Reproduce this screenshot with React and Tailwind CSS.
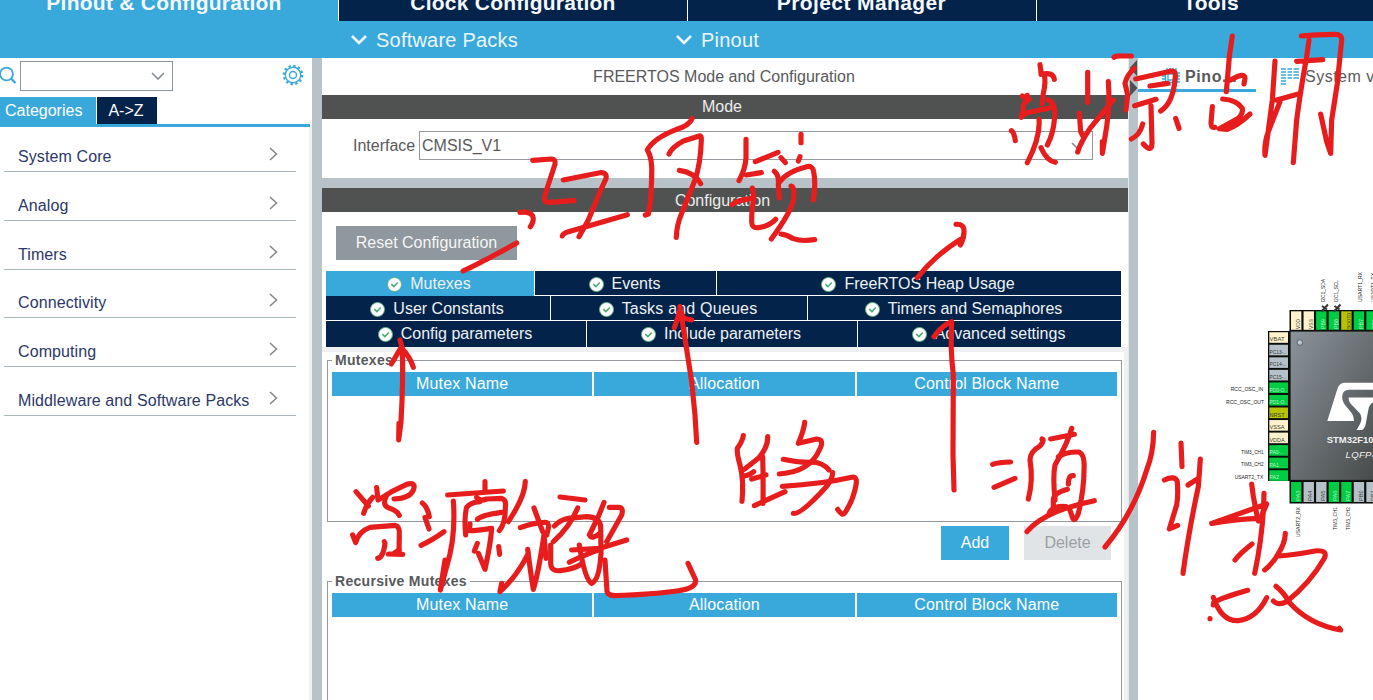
import React from "react";

const Check = () => (
  <svg className="h-[15px] w-[15px] shrink-0" viewBox="0 0 15 15">
    <circle cx="7.500" cy="7.500" r="7" fill="#fff" stroke="#5cb07e" strokeWidth="0.900" />
    <path d="M4.300 7.100 6.900 9.600 10.800 5.400" fill="none" stroke="#46ab70" strokeWidth="1.500" />
  </svg>
);

const Chevron = ({ className, d = "M1 1 7 7 13 1", box = "0 0 14 8", w = 1.6 }) => (
  <svg className={className} viewBox={box}>
    <path d={d} fill="none" stroke="currentColor" strokeWidth={w} />
  </svg>
);

const Header = () => (
  <header className="shrink-0 bg-[#39a9dc] text-white">
    <div className="flex h-[21px] overflow-hidden text-center text-[21px] leading-[24px] font-bold tracking-[0.25px] text-[#f4f8fb]">
      <div className="w-[338px] shrink-0 pr-[10px]"><div className="-mt-[9px] whitespace-nowrap">Pinout &amp; Configuration</div></div>
      <div className="w-[349px] shrink-0 border-l border-white bg-[#03234b]"><div className="-mt-[9px]">Clock Configuration</div></div>
      <div className="w-[349px] shrink-0 border-l border-white bg-[#03234b]"><div className="-mt-[9px] pr-[1px] tracking-[0.4px]">Project Manager</div></div>
      <div className="w-[349px] shrink-0 border-l border-white bg-[#03234b]"><div className="-mt-[9px]">Tools</div></div>
    </div>
    <div className="flex h-[37px] items-center text-[20px] tracking-[0.22px] text-[#edf6fb]">
      <div className="box-content flex w-[325px] items-center gap-[9px] pl-[351px]">
        <Chevron className="h-[11px] w-[16px]" box="0 0 16 11" d="M1 2 8 9 15 2" w={2.6} />
        <span>Software Packs</span>
      </div>
      <div className="flex items-center gap-[9px]">
        <Chevron className="h-[11px] w-[16px]" box="0 0 16 11" d="M1 2 8 9 15 2" w={2.6} />
        <span>Pinout</span>
      </div>
    </div>
  </header>
);

const Gear = () => (
  <svg className="h-[22px] w-[22px] text-[#39a9dc]" viewBox="0 0 22 22" fill="none" stroke="currentColor">
    <circle cx="11" cy="11" r="3.500" strokeWidth="1.400" />
    <circle cx="11" cy="11" r="7.700" strokeWidth="1.400" />
    <circle cx="11" cy="11" r="9.200" strokeWidth="2.200" strokeDasharray="2.400 2.417" />
  </svg>
);

const categories = ["System Core", "Analog", "Timers", "Connectivity", "Computing", "Middleware and Software Packs"];

const Sidebar = () => (
  <aside className="flex w-[312px] shrink-0 flex-col bg-white">
    <div className="flex h-[39px] shrink-0 items-start pt-[3px]">
      <svg className="mt-[4px] h-[20px] w-[20px] shrink-0" viewBox="0 0 20 20" fill="none" stroke="#39a9dc">
        <circle cx="6.500" cy="9" r="6.400" strokeWidth="1.800" />
        <path d="M11 13.500 15.500 18" strokeWidth="2.300" />
      </svg>
      <div className="flex h-[30px] w-[153px] items-center justify-end border border-[#8c959b] pr-[7px] text-[#858b90]">
        <Chevron className="h-[8px] w-[14px]" />
      </div>
      <div className="mt-[3px] ml-[109px]"><Gear /></div>
    </div>
    <div className="flex h-[27px] shrink-0 gap-px text-[16px] text-white">
      <div className="w-[96px] bg-[#39a9dc] pl-[5px] leading-[27px]">Categories</div>
      <div className="w-[60px] bg-[#03234b] pr-[2px] text-center leading-[27px]">A-&gt;Z</div>
    </div>
    <div className="h-[3px] w-[310px] shrink-0 bg-[#39a9dc]" />
    <div className="flex-1 border-r-[3px] border-[#eef0f2] pr-[13px] pl-[4px]">
      {categories.map((c, i) => (
        <div key={c} className={(i === 0 ? "h-[45px]" : "h-[48.8px]") + " flex items-end justify-between border-b border-[#a9b7bd] pr-[18px] pb-[3px] pl-[14px] text-[16px] tracking-[0.1px] text-[#2c3868]"}>
          <span className="leading-[22px]">{c}</span>
          <Chevron className="mb-[7px] h-[14px] w-[9px] text-[#858585]" box="0 0 9 14" d="M1 1 7.500 7 1 13" w={1.5} />
        </div>
      ))}
    </div>
  </aside>
);

const TabCell = ({ label, cls }) => (
  <div className={"flex items-center justify-center gap-[8px] pr-[2px] " + cls}>
    <Check />
    <span>{label}</span>
  </div>
);

const TableHead = () => (
  <div className="mx-[4px] grid grid-cols-3 gap-[2px] text-center text-[16px] leading-[24px] tracking-[0.15px] text-white">
    <div className="h-[24px] bg-[#39a9dc]">Mutex Name</div>
    <div className="h-[24px] bg-[#39a9dc]">Allocation</div>
    <div className="h-[24px] bg-[#39a9dc]">Control Block Name</div>
  </div>
);

const Group = ({ title, cls }) => (
  <fieldset className={"ml-[5px] w-[795px] shrink-0 border border-[#93999d] " + cls}>
    <legend className="ml-[4px] px-[3px] text-[14px] leading-[16px] font-bold tracking-[0.3px] text-[#58595b]">{title}</legend>
    <div className="pt-[4px]"><TableHead /></div>
  </fieldset>
);

const Middle = () => (
  <main className="flex w-[806px] shrink-0 flex-col bg-white text-[16px] text-[#58595b]">
    <div className="h-[37px] shrink-0 pt-px pr-[2px] text-center leading-[36px]">FREERTOS Mode and Configuration</div>
    <div className="h-[24px] shrink-0 bg-[#505251] pr-[6px] text-center leading-[24px] text-[#eceded]">Mode</div>
    <div className="flex h-[59px] shrink-0 items-start pt-[12px] pl-[31px]">
      <span className="w-[66px] leading-[30px]">Interface</span>
      <div className="flex h-[29px] w-[674px] items-center justify-between border border-[#93999d] pr-[7px] pl-[2px]">
        <span>CMSIS_V1</span>
        <Chevron className="h-[8px] w-[14px] text-[#858b90]" />
      </div>
    </div>
    <div className="h-[10px] shrink-0 bg-[#b7c3c9]" />
    <div className="h-[24px] shrink-0 bg-[#505251] pr-[5px] text-center leading-[25px] text-[#eceded]">Configuration</div>
    <div className="mt-[14px] ml-[14px] h-[34px] w-[181px] shrink-0 bg-[#8f989e] text-center leading-[34px] text-[#f5f6f7]">Reset Configuration</div>
    <div className="mt-[11px] ml-[4px] flex h-[76px] w-[795px] shrink-0 flex-col gap-px text-[#eef1f4]">
      <div className="flex h-[24px] shrink-0 gap-px">
        <TabCell label="Mutexes" cls="-mb-[2px] h-[26px] w-[208px] bg-[#39a9dc]" />
        <TabCell label="Events" cls="w-[181px] bg-[#03234b] pt-[2px]" />
        <TabCell label="FreeRTOS Heap Usage" cls="flex-1 bg-[#03234b] pt-[2px]" />
      </div>
      <div className="flex h-[24px] shrink-0 gap-px">
        <TabCell label="User Constants" cls="w-[224px] bg-[#03234b] pt-[2px]" />
        <TabCell label="Tasks and Queues" cls="w-[256px] bg-[#03234b] pt-[2px] tracking-[0.2px]" />
        <TabCell label="Timers and Semaphores" cls="flex-1 bg-[#03234b] pt-[2px]" />
      </div>
      <div className="flex h-[26px] shrink-0 gap-px">
        <TabCell label="Config parameters" cls="w-[260px] bg-[#03234b]" />
        <TabCell label="Include parameters" cls="w-[270px] bg-[#03234b]" />
        <TabCell label="Advanced settings" cls="flex-1 bg-[#03234b]" />
      </div>
    </div>
    <div className="h-[5px] shrink-0 bg-[#eef0f2]" />
    <div className="flex min-h-0 flex-1 flex-col border-r-[4px] border-[#eef0f2]">
      <Group title="Mutexes" cls="h-[170px]" />
      <div className="mt-[4px] flex h-[34px] shrink-0 justify-end gap-[15px] pr-[13px] text-center leading-[34px]">
        <div className="w-[68px] bg-[#39a9dc] text-white">Add</div>
        <div className="w-[87px] bg-[#e1e4e7] text-[#9a9fa4]">Delete</div>
      </div>
      <Group title="Recursive Mutexes" cls="mt-[13px] h-[200px]" />
    </div>
  </main>
);

const Y = "#fff2cc", N = "#b5c0c8", G = "#00cc44", O = "#b8c400";
const leftPins = [["VBAT", Y], ["PC13-..", N], ["PC14-..", N], ["PC15-..", N], ["PD0-O..", G], ["PD1-O..", G], ["NRST", O], ["VSSA", Y], ["VDDA", Y], ["PA0-..", G], ["PA1", G], ["PA2", G]];
const topPins = [["VDD", Y], ["VSS", Y], ["PB9", G], ["PB8", G], ["BOOT0", O], ["PB7", G], ["PB6", G]];
const bottomPins = [["PA3", G], ["PA4", N], ["PA5", N], ["PA6", G], ["PA7", G], ["PB0", N], ["PB1", N]];
const leftWidths = [15, 16.5, 16.5, 16.5, 17.5, 17.5, 15, 15, 15, 13.5, 9.5, 9.5];
const pinInk = (c) => (c === G ? "#b9f5c9" : "#3a3f36");

const Chip = () => (
  <svg className="block h-[608px] w-[235px]" viewBox="1138 92 235 608" fontFamily="Liberation Sans, sans-serif">
    <defs>
      <linearGradient id="die" x1="0" y1="0" x2="1" y2="1">
        <stop offset="0" stopColor="#8b949b" />
        <stop offset="1" stopColor="#454847" />
      </linearGradient>
    </defs>
    <path d="M1289.500 310H1380V332H1289.500ZM1268 331H1291V481H1268ZM1289.500 480H1380V503.500H1289.500Z" fill="#0a0d0a" />
    {leftPins.map(([t, c], i) => (
      <g key={t}>
        <rect x="1269.300" y={332.2 + i * 12.55} width="18.700" height="10.600" fill={c} />
        <text x="1269.500" y={341.3 + i * 12.55} fontSize="5.300" textLength={leftWidths[i]} lengthAdjust="spacingAndGlyphs" fill={pinInk(c)}>{t}</text>
      </g>
    ))}
    {topPins.map(([t, c], i) => (
      <g key={t}>
        <rect x={1291 + i * 12.55} y="311.300" width="10.400" height="18.500" fill={c} />
        <text transform={`translate(${1300.3 + i * 12.55} 329) rotate(-90)`} fontSize="5.300" textLength={t.length > 3 ? 16 : 10} lengthAdjust="spacingAndGlyphs" fill={pinInk(c)}>{t}</text>
      </g>
    ))}
    {bottomPins.map(([t, c], i) => (
      <g key={t}>
        <rect x={1291 + i * 12.55} y="482" width="10.400" height="20" fill={c} />
        <text transform={`translate(${1299.8 + i * 12.55} 501) rotate(-90)`} fontSize="5.300" textLength="10.500" lengthAdjust="spacingAndGlyphs" fill={pinInk(c)}>{t}</text>
      </g>
    ))}
    <rect x="1290" y="331" width="90" height="149.500" fill="url(#die)" stroke="#111" strokeWidth="1.200" />
    <circle cx="1299.800" cy="342.500" r="2.800" fill="#b8c6cf" stroke="#555e64" strokeWidth="0.900" />
    <g fill="#222" fontSize="5.300">
      <text x="1230.700" y="391.300" textLength="32.500" lengthAdjust="spacingAndGlyphs">RCC_OSC_IN</text>
      <text x="1226" y="403.800" textLength="38" lengthAdjust="spacingAndGlyphs">RCC_OSC_OUT</text>
      <text x="1241" y="453.800" textLength="22.500" lengthAdjust="spacingAndGlyphs">TIM3_CH1</text>
      <text x="1241" y="466.300" textLength="22.500" lengthAdjust="spacingAndGlyphs">TIM3_CH2</text>
      <text x="1234.700" y="479" textLength="28.500" lengthAdjust="spacingAndGlyphs">USART2_TX</text>
      <text transform="translate(1325 302) rotate(-90)" textLength="23" lengthAdjust="spacingAndGlyphs">I2C1_SDA</text>
      <text transform="translate(1337.800 302) rotate(-90)" textLength="22" lengthAdjust="spacingAndGlyphs">I2C1_SCL</text>
      <text transform="translate(1362.300 302) rotate(-90)" textLength="30" lengthAdjust="spacingAndGlyphs">USART1_RX</text>
      <text transform="translate(1374.500 302) rotate(-90)" textLength="29" lengthAdjust="spacingAndGlyphs">USART1_TX</text>
      <text transform="translate(1300 537) rotate(-90)" textLength="30" lengthAdjust="spacingAndGlyphs">USART2_RX</text>
      <text transform="translate(1337 530) rotate(-90)" textLength="23" lengthAdjust="spacingAndGlyphs">TIM3_CH1</text>
      <text transform="translate(1349.500 530) rotate(-90)" textLength="23" lengthAdjust="spacingAndGlyphs">TIM3_CH2</text>
    </g>
    <path d="M1328 304.500 1321.500 311.500M1322 306 1327 309.500M1340.500 304.500 1334 311.500M1334.500 306 1339.500 309.500" stroke="#333" strokeWidth="2" fill="none" />
    <path fill="#fff" d="M1327.300 421 1337.500 388.500Q1339.500 382.700 1345 382.700H1373V389.800H1349C1341 390 1340.500 399 1345 405L1352 413.500Q1354 417 1354 421Z" />
    <path fill="#fff" d="M1348.500 397.600H1373V402.500Q1369.500 404 1368.500 409L1365.500 425Q1364 430 1361 430H1356.500C1361 423 1363 419 1360 413.500L1350.500 403.500Q1348.500 401 1348.500 397.600Z" />
    <text x="1326.800" y="443.300" fontSize="8.800" fontWeight="bold" textLength="64" lengthAdjust="spacingAndGlyphs" fill="#f0f1f1">STM32F103C8</text>
    <text x="1345.500" y="458.300" fontSize="9.600" fontStyle="italic" letterSpacing="0.300" fill="#f0f1f1">LQFP48</text>
  </svg>
);

const ChipIcon = () => (
  <svg className="h-[18px] w-[18px]" viewBox="0 0 18 18" fill="none" stroke="#39a9dc">
    <rect x="3.500" y="3.500" width="11" height="11" strokeWidth="1.500" />
    <path d="M6 7V6H12V12H6Z" strokeWidth="1.300" />
    <path d="M5 0V3M8 0V3M11 0V3M14 0V3M5 15V18M8 15V18M11 15V18M14 15V18M0 5H3M0 8H3M0 11H3M0 14H3M15 5H18M15 8H18M15 11H18M15 14H18" strokeWidth="1.400" />
  </svg>
);

const Right = () => (
  <section className="flex min-w-0 flex-1 flex-col overflow-hidden bg-white">
    <div className="flex h-[34px] shrink-0 text-[16px] text-[#58595b]">
      <div className="flex h-[34px] w-[118px] shrink-0 items-center gap-[5px] border-b-[3px] border-[#39a9dc] pt-[6px] pl-[24px] font-bold tracking-[0.6px]">
        <ChipIcon />
        <span>Pino...</span>
      </div>
      <div className="flex shrink-0 items-center gap-[6px] pt-[3px] pl-[25px] tracking-[0.5px] whitespace-nowrap">
        <svg className="h-[17px] w-[18px]" viewBox="0 0 18 17" stroke="#39a9dc" strokeWidth="1.600">
          <path d="M0 1H5M6.500 1H11M12.500 1H18M0 4H5M6.500 4H11M12.500 4H18M0 7H5M6.500 7H11M12.500 7H18M0 10H5M6.500 10H11M12.500 10H18M0 13H5M0 16H5" />
        </svg>
        <span>System view</span>
      </div>
    </div>
    <Chip />
  </section>
);

// Freehand pen layer: each sheet holds strokes in thirds of a pixel from its own origin.
const sheets = [
  [500, 110, [
    "M98 151 155 147Q168 148 165 162L134 258Q130 276 145 277L222 272",
    "M190 210 300 188Q322 186 318 206L300 245 265 330 237 380",
    "M187 378Q188 370 205 365L265 348 382 314",
    "M60 307Q90 303 98 318 104 332 91 350",
    "M576 26Q568 46 530 58 460 85 442 120 458 145 455 200 453 280 445 312L436 315",
    "M507 132Q515 112 550 93L598 78Q605 76 604 90 602 160 585 210L545 310Q530 345 529 382",
    "M538 181Q585 188 602 221",
    "M738 88V145Q735 180 717 212",
    "M766 155 834 127M739 195 784 188M843 143 856 158M903 73V98M900 140 895 153",
    "M696 284Q712 270 757 265",
    "M757 234 762 265Q755 290 755 335 755 356 775 353 805 350 827 328",
    "M823 184Q838 195 835 225L838 264",
    "M840 215Q860 185 920 170 938 166 941 185 948 220 940 270",
    "M873 228Q885 230 881 265 878 300 814 387",
    "M843 372Q860 374 880 386 905 395 944 389",
  ]],
  [990, 20, [
    "M150 134Q153 150 153 163 190 155 193 178",
    "M163 165Q168 185 160 220L156 252",
    "M97 228 115 240 112 226M118 238Q95 250 100 270L93 292Q100 280 125 275L190 262",
    "M175 240Q200 250 193 300 190 340 172 375",
    "M147 297Q152 350 112 428M153 383Q170 422 196 427M64 332Q72 336 76 362",
    "M293 157V247M355 185Q360 250 350 320L337 400V365",
    "M268 280 272 335 280 350M263 396Q270 370 300 325L370 240",
    "M372 112Q378 107 395 108L424 108",
    "M433 145Q410 165 405 190L413 225 408 270",
    "M437 177 545 153Q560 152 555 180 548 250 512 273",
    "M480 198 533 190M434 257 498 238",
    "M483 257 486 370Q485 400 460 372M458 312Q450 345 424 357M557 295 567 325",
    "M727 48 718 110 709 215M722 180Q765 155 765 175L762 192",
    "M667 260 663 310Q664 325 675 322",
    "M698 237Q740 240 757 265 760 280 745 295L688 326 712 328Q745 315 780 282",
    "M855 123 847 240 825 406Q822 370 835 335L870 245M860 240 925 222",
    "M957 60 950 110Q930 220 920 300L910 428M920 124 998 119",
    "M934 48Q980 43 1035 43 1056 43 1055 60L1042 190 1025 300 1022 400 1010 365 992 282",
  ]],
  [320, 215, [
    "M429 168Q480 145 590 84",
    "M240 375 247 400Q250 500 243 620L236 675 237 625",
    "M214 447 243 398Q270 425 280 457",
    "M1080 275 1098 390 1115 500 1125 600 1130 682M1063 338Q1070 320 1080 285L1092 310 1115 315",
  ]],
  [720, 215, [
    "M592 188Q650 115 730 68M708 28Q733 26 732 50 732 70 721 90",
    "M642 365Q665 332 695 320 690 400 700 480L699 720 702 825",
  ]],
  [320, 420, [
    "M108 215 145 258M158 232Q140 250 131 280",
    "M170 203 174 240Q200 225 215 215L260 193Q290 185 280 210 270 235 222 237",
    "M200 225Q185 255 205 263 230 270 238 286",
    "M98 345 107 368Q115 335 150 322L225 316Q240 318 238 345L237 395",
    "M173 415Q190 412 195 370L193 365M205 402 248 403M225 398 237 390",
    "M307 249Q322 260 328 290M315 292 327 327M303 376Q335 362 372 335",
    "M400 243Q408 350 380 440L361 510 375 420",
    "M383 225 550 213M495 185V215",
    "M437 345Q432 290 440 262 450 248 480 245M470 232Q480 245 500 237L545 235Q560 240 556 260 557 310 538 332",
    "M472 298Q485 285 545 277M450 312 448 332Q470 332 515 325 512 370 495 448L475 400",
    "M472 370 463 393M536 380 539 403M616 184Q615 230 565 305",
    "M601 323Q640 308 672 307 688 305 685 325L680 345M642 264 668 335",
    "M545 490 540 515Q590 470 625 400L623 388Q632 460 640 508 655 460 672 345L678 415",
    "M720 231 795 240M773 264Q750 320 700 365",
    "M703 318Q720 300 745 295L800 290Q840 292 842 320L843 400Q838 480 815 490 795 480 778 375",
    "M692 375V430Q693 455 720 452 760 448 785 432",
    "M852 247 835 290 808 345Q815 360 840 340",
    "M868 262 895 262Q912 262 905 285L860 365",
    "M755 390 840 385 920 360M748 427Q780 410 840 388",
    "M855 420 861 515Q865 527 885 527 1000 523 1070 513 1130 505 1127 480L1104 430",
  ]],
  [690, 410, [
    "M160 77Q157 95 142 115 140 130 150 165 162 210 156 274",
    "M233 80Q235 110 205 145L163 178M163 198Q180 195 191 185M218 140Q220 200 219 280M185 207 228 195M193 287 285 245",
    "M344 37Q342 60 325 100L380 87Q405 88 388 120 360 185 268 192",
    "M280 148Q320 158 365 157 395 155 417 180",
    "M277 229Q400 222 485 202 503 198 498 225 490 270 465 308 457 320 443 298",
    "M428 188Q428 210 400 240 330 315 310 310",
  ]],
  [920, 410, [
    "M218 163Q235 157 272 156M222 232 285 205",
    "M366 87Q375 90 360 108 330 125 330 150 340 210 325 267",
    "M392 87 463 73M455 55Q445 95 405 165 398 200 405 270",
    "M415 140Q440 125 475 126 495 130 492 180 492 240 475 310 462 345 455 315L448 295",
    "M460 197Q445 195 445 222M442 238Q400 250 400 270V292M438 290Q400 285 388 308",
    "M321 365Q350 330 410 305 460 285 523 272",
    "M701 67Q700 130 680 180 640 310 555 411",
    "M783 99 786 170M733 210Q765 195 772 215 775 260 770 285L748 357 773 346",
    "M804 225 835 205M841 147 835 230Q805 370 789 490",
    "M995 222Q1000 270 1015 333M1032 250Q1030 370 1004 490",
    "M875 340 1040 282 1022 325Q950 327 875 340",
    "M945 450Q960 430 996 402M1096 370Q1095 400 1075 430 1060 460 1034 480",
    "M1075 438Q1110 437 1185 423 1225 418 1213 445 1170 520 1100 575 1075 588 1060 573",
    "M1068 529Q1090 545 1110 580 1170 645 1262 660L1258 655",
    "M880 585 881 578Q900 565 983 541M880 562Q905 635 955 632 1010 625 1040 563M870 626V626.100",
  ]],
];

const PenLayer = () => (
  <svg className="pointer-events-none absolute inset-0 h-[700px] w-[1373px]" viewBox="0 0 1373 700" fill="none" stroke="#e71d1d" strokeWidth="15.500" strokeLinecap="round" strokeLinejoin="round">
    {sheets.map(([x, y, strokes], i) => (
      <g key={i} transform={`translate(${x} ${y}) scale(0.33333)`}>
        {strokes.map((d) => <path key={d} d={d} />)}
      </g>
    ))}
  </svg>
);

export default function App() {
  return (
    <div className="relative flex h-[700px] w-[1373px] flex-col overflow-hidden bg-white font-['Liberation_Sans',Arial,sans-serif]">
      <Header />
      <div className="flex min-h-0 flex-1">
        <Sidebar />
        <div className="w-[10px] shrink-0 bg-[#b7c3c9]" />
        <Middle />
        <div className="w-[10px] shrink-0 border-l border-[#e3e8ea] bg-[#b7c3c9] pt-[2px]">
          <svg className="h-[38px] w-[9px]" viewBox="0 0 9 38" fill="#505251">
            <path d="M8 0V16L0.500 8ZM1 20V36L8.500 28Z" />
          </svg>
        </div>
        <Right />
      </div>
      <PenLayer />
    </div>
  );
}
